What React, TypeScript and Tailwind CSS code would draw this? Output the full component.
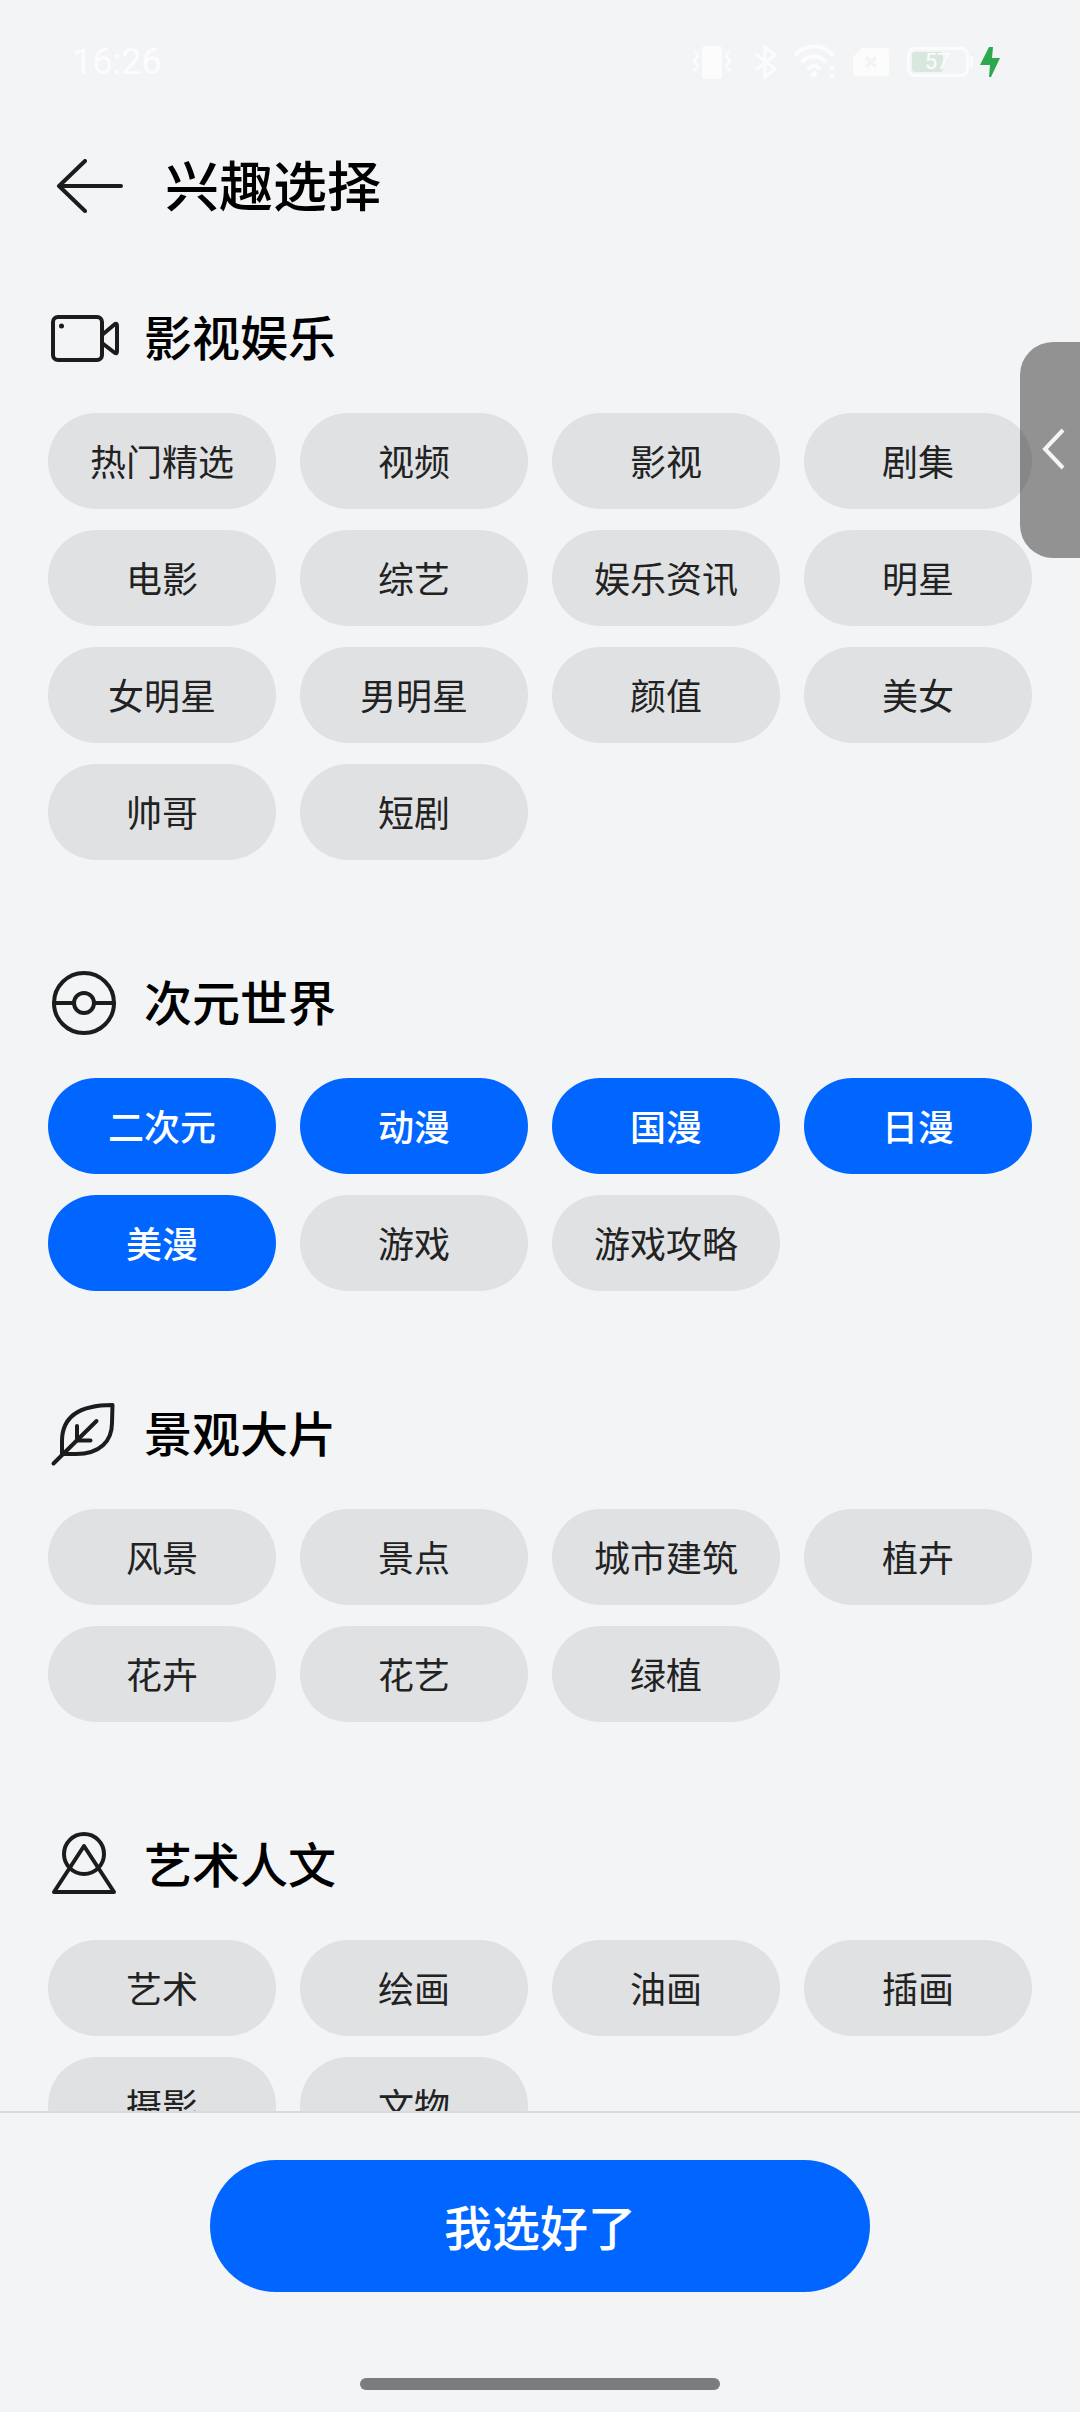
const font = "font-['Noto_Sans_CJK_SC','Noto_Sans',sans-serif]";

const sections = [
  {
    title: "影视娱乐",
    icon: "video",
    tags: ["热门精选", "视频", "影视", "剧集", "电影", "综艺", "娱乐资讯", "明星", "女明星", "男明星", "颜值", "美女", "帅哥", "短剧"],
    active: [] as string[],
  },
  {
    title: "次元世界",
    icon: "ball",
    tags: ["二次元", "动漫", "国漫", "日漫", "美漫", "游戏", "游戏攻略"],
    active: ["二次元", "动漫", "国漫", "日漫", "美漫"],
  },
  {
    title: "景观大片",
    icon: "leaf",
    tags: ["风景", "景点", "城市建筑", "植卉", "花卉", "花艺", "绿植"],
    active: [] as string[],
  },
  {
    title: "艺术人文",
    icon: "art",
    tags: ["艺术", "绘画", "油画", "插画", "摄影", "文物"],
    active: [] as string[],
  },
];

function SectionIcon({ name }: { name: string }) {
  return (
    <svg width="72" height="64" viewBox="0 0 72 64" fill="none" stroke="#1c1c1c" strokeWidth="4" strokeLinecap="round" strokeLinejoin="round" className="shrink-0 overflow-visible">
      {name === "video" && (
        <g>
          <rect x="5" y="14" width="49" height="43" rx="5" />
          <path d="M54 32 L67 21 Q69 20 69 23 V48 Q69 51 67 50 L54 40" />
          <circle cx="13.500" cy="23" r="2.500" fill="#1c1c1c" stroke="none" />
        </g>
      )}
      {name === "ball" && (
        <g>
          <circle cx="36" cy="35" r="30" />
          <circle cx="36" cy="35" r="10" />
          <path d="M6 35 H26 M46 35 H66" />
        </g>
      )}
      {name === "leaf" && (
        <g>
          <path d="M5.500 64.500 L48.500 22" />
          <path d="M64.500 6 C40 6 14 12 14 42 V55 H28 C52 55 64 42 64 24 Z" />
          <path d="M29 27 V41.500 H42.500" />
        </g>
      )}
      {name === "art" && (
        <g>
          <circle cx="36" cy="24" r="20" />
          <path d="M36 16 L6 62 H66 Z" />
        </g>
      )}
    </svg>
  );
}

function Chip({ label, active }: { label: string; active: boolean }) {
  return (
    <div
      className={
        active
          ? "h-[96px] pb-[2px] rounded-full bg-[#0066ff] flex items-center justify-center text-[36px] font-medium text-white"
          : "h-[96px] pb-[2px] rounded-full bg-[#e0e1e3] flex items-center justify-center text-[36px] text-[#222222]"
      }
    >
      {label}
    </div>
  );
}

function StatusIcons() {
  return (
    <div className="flex items-center">
      <svg width="56" height="36" viewBox="0 0 56 36" fill="none" stroke="#fcfcfd" strokeWidth="2.500" className="mr-[14px]">
        <rect x="18" y="2" width="20" height="33" rx="3" fill="#fcfcfd" stroke="none" />
        <path d="M11 8 L14 12 L10 17 L14 22 L10 27 M45 8 L42 12 L46 17 L42 22 L46 27" />
      </svg>
      <svg width="24" height="36" viewBox="0 0 24 36" fill="none" stroke="#fcfcfd" strokeWidth="3" className="mr-[16px]">
        <path d="M2 10 L21 25 L11 33 V3 L21 11 L2 26" />
      </svg>
      <svg width="44" height="36" viewBox="0 0 44 36" fill="none" stroke="#fcfcfd" strokeWidth="4" strokeLinecap="round" className="mr-[14px]">
        <path d="M2 10 C12 0 28 0 38 10 M9 17 C15 11 25 11 31 17 M15 24 C18 21 22 21 25 24" />
        <circle cx="20" cy="30" r="3" fill="#fcfcfd" stroke="none" />
        <path d="M34 26 L38 21 L42 26 Z M34 30 L38 35 L42 30 Z" fill="#fcfcfd" stroke="none" />
      </svg>
      <svg width="38" height="30" viewBox="0 0 38 30" className="mr-[17px]">
        <path d="M10 1 H34 Q37 1 37 4 V26 Q37 29 34 29 H4 Q1 29 1 26 V10 Z" fill="#fcfcfd" />
        <path d="M14 10 L24 20 M24 10 L14 20" stroke="#f3f4f6" strokeWidth="3.500" />
      </svg>
      <div className="relative w-[62px] h-[30px] rounded-[8px] border-[3px] border-[#fcfcfd] mr-[1px]">
        <div className="absolute left-[2px] top-[2px] bottom-[2px] w-[31px] rounded-[3px] bg-[#d9e8df]" />
        <span className="absolute inset-0 flex items-center justify-center pr-[2px] text-[22px] leading-none text-[#fcfcfd] font-['Roboto',sans-serif]">57</span>
      </div>
      <div className="w-[3px] h-[12px] bg-[#fcfcfd] rounded-r-[2px] mr-[7px]" />
      <svg width="20" height="30" viewBox="0 0 20 30">
        <path d="M9 0 H13 L12 11 H20 L11 30 H9 L10 18 H0 Z" fill="#2ea84f" />
      </svg>
    </div>
  );
}

export default function App() {
  return (
    <div className={`relative w-[1080px] h-[2412px] overflow-hidden bg-[#f3f4f6] flex flex-col ${font}`}>
      {/* status bar */}
      <div className="h-[84px] shrink-0 pl-[72px] pr-[80px] pt-[40px] flex items-center justify-between">
        <span className="text-[36px] leading-none text-[#fcfcfd] font-['Roboto',sans-serif]">16:26</span>
        <StatusIcons />
      </div>

      {/* header */}
      <div className="h-[124px] shrink-0 mt-[40px] flex items-center pl-[56px] gap-[41px]">
        <svg width="68" height="54" viewBox="0 0 68 54" fill="none" stroke="#1c1c1c" strokeWidth="4" strokeLinecap="round" strokeLinejoin="round">
          <path d="M3 27 H65 M29 2 L3 27 L29 52" />
        </svg>
        <h1 className="text-[54px] pb-[4px] font-medium text-black leading-none">兴趣选择</h1>
      </div>

      {/* scroll area */}
      <div className="flex-1 overflow-hidden pl-[48px] pr-[48px] pt-[55px] flex flex-col gap-[108px]">
        {sections.map((s) => (
          <section key={s.title}>
            <div className="h-[64px] flex items-center gap-[24px]">
              <SectionIcon name={s.icon} />
              <h2 className="text-[48px] font-medium text-black leading-none">{s.title}</h2>
            </div>
            <div className="mt-[46px] grid grid-cols-4 gap-x-[24px] gap-y-[21px]">
              {s.tags.map((t) => (
                <Chip key={t} label={t} active={s.active.includes(t)} />
              ))}
            </div>
          </section>
        ))}
      </div>

      {/* footer */}
      <div className="h-[301px] shrink-0 border-t-2 border-[#d9dadc] bg-[#f3f4f6] flex flex-col items-center">
        <button className="mt-[47px] w-[660px] h-[132px] pb-[2px] rounded-full bg-[#0066ff] text-[48px] font-medium text-white">我选好了</button>
        <div className="mt-[86px] w-[360px] h-[12px] rounded-full bg-[#7c7c7e]" />
      </div>

      {/* side handle */}
      <div className="absolute right-0 top-[342px] w-[60px] h-[216px] rounded-l-[33px] bg-black/40 flex items-center pl-[22px] pb-[2px]">
        <svg width="24" height="42" viewBox="0 0 24 42" fill="none" stroke="#f5f5f5" strokeWidth="4">
          <path d="M21 2 L3 21 L21 40" />
        </svg>
      </div>
    </div>
  );
}
